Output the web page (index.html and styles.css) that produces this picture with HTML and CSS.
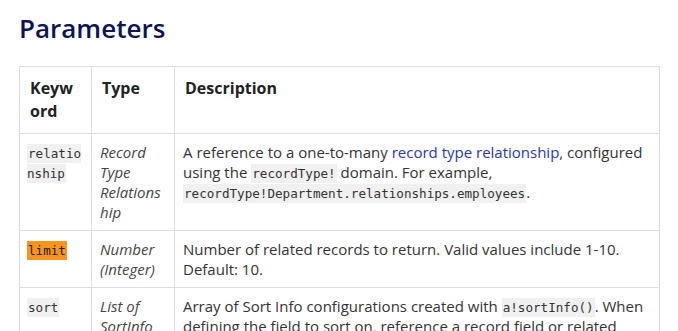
FILE: index.html
```html
<!DOCTYPE html>
<html lang="en">
<head>
    <meta charset="UTF-8">
    <title>Parameters</title>
    <link rel="stylesheet" href="styles.css">
</head>
<body>
    <div class="content">
        <h2>Parameters</h2>
        <table class="params">
            <colgroup>
                <col class="col-key">
                <col class="col-type">
                <col class="col-desc">
            </colgroup>
            <thead>
                <tr>
                    <th>Keyword</th>
                    <th>Type</th>
                    <th>Description</th>
                </tr>
            </thead>
            <tbody>
                <tr>
                    <td><code>relationship</code></td>
                    <td><em>Record Type Relationship</em></td>
                    <td>A reference to a one-to-many <a href="#">record type relationship</a>, configured using the <code>recordType!</code> domain. For example, <code>recordType!Department.relationships.employees</code>.</td>
                </tr>
                <tr>
                    <td><code class="highlight">limit</code></td>
                    <td><em>Number (Integer)</em></td>
                    <td>Number of related records to return. Valid values include 1-10. Default: 10.</td>
                </tr>
                <tr>
                    <td><code>sort</code></td>
                    <td><em>List of SortInfo</em></td>
                    <td>Array of Sort Info configurations created with <code>a!sortInfo()</code>. When defining the field to sort on, reference a record field or related record field.</td>
                </tr>
            </tbody>
        </table>
    </div>
</body>
</html>
```

FILE: styles.css
```css
* {
    margin: 0;
    padding: 0;
    box-sizing: border-box;
}

body {
    font-family: 'Open Sans', Arial, sans-serif;
    background-color: #fff;
    color: #333;
    font-size: 15px;
    line-height: 20px;
}

.content {
    padding: 10px 19px;
}

.content h2 {
    font-size: 26px;
    font-weight: 600;
    line-height: 36px;
    color: #0c1456;
    margin-bottom: 20px;
}

.params {
    width: 641px;
    border-collapse: collapse;
    table-layout: fixed;
}

.col-key {
    width: 72px;
}

.col-type {
    width: 83px;
}

.params th,
.params td {
    border: 1px solid #ddd;
    text-align: left;
    vertical-align: top;
    padding: 8px 8px 8px 8px;
    overflow-wrap: anywhere;
}

.params td:first-child {
    padding-left: 7px;
    padding-right: 7px;
}

.params th {
    font-weight: 700;
    font-size: 16px;
    line-height: 23px;
    color: #222;
    padding: 10px 8px 10px 10px;
}

.params th:first-child {
    padding-right: 12px;
}

.params em {
    color: #444;
}

.params a {
    color: #2537b8;
    text-decoration: none;
}

.params code {
    font-family: 'DejaVu Sans Mono', 'Liberation Mono', monospace;
    font-size: 12.6px;
    line-height: 1;
    background-color: #f0f0f0;
    padding: 2px 1px;
    color: #333;
}

.params td:first-child code {
    word-break: break-all;
}

.params code.highlight {
    background-color: #f7931e;
    color: #222;
}
```
